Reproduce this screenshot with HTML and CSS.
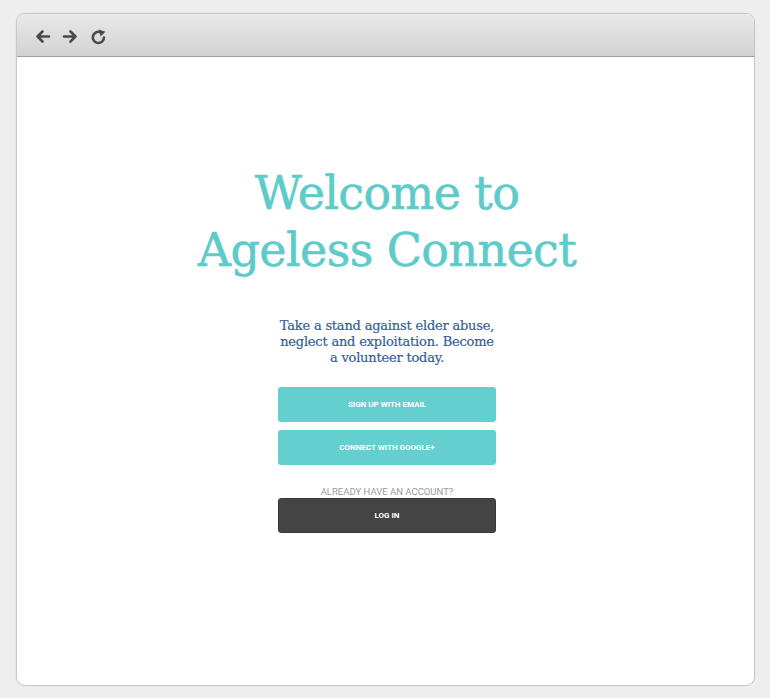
FILE: index.html
```html
<!DOCTYPE html>
<html>
<head>
<meta charset="utf-8">
<link rel="stylesheet" href="styles.css">
</head>
<body>
<div class="window">
  <div class="toolbar">
    <svg class="icon" width="17" height="17" viewBox="0 0 17 17"><path d="M15 8.5H3.5M8.5 3.5l-5 5 5 5" fill="none" stroke="#4a4a4a" stroke-width="2.6" stroke-linecap="round" stroke-linejoin="round"/></svg>
    <svg class="icon" width="17" height="17" viewBox="0 0 17 17"><path d="M2 8.5h11.5M8.5 3.5l5 5-5 5" fill="none" stroke="#4a4a4a" stroke-width="2.6" stroke-linecap="round" stroke-linejoin="round"/></svg>
    <svg class="icon" width="17" height="17" viewBox="0 0 17 17"><path d="M14 9.5A5.6 5.6 0 1 1 10.2 4.1" fill="none" stroke="#4a4a4a" stroke-width="2.6" stroke-linecap="round"/><path d="M8.6 1.4L15.4 3.8 10.6 8.6Z" fill="#4a4a4a"/></svg>
  </div>
  <div class="content">
    <h1 class="title">Welcome to<br>Ageless Connect</h1>
    <p class="lead">Take a stand against elder abuse, neglect and exploitation. Become a volunteer today.</p>
    <div class="actions">
      <button class="btn btn-teal">SIGN UP WITH EMAIL</button>
      <button class="btn btn-teal">CONNECT WITH GOOGLE+</button>
      <div class="already">ALREADY HAVE AN ACCOUNT?</div>
      <button class="btn btn-dark">LOG IN</button>
    </div>
  </div>
</div>
</body>
</html>
```

FILE: styles.css
```css
html, body {
  margin: 0;
  padding: 0;
  background: #eeeeee;
}
body {
  padding: 13px 15px 12px 16px;
}
.window {
  height: 673px;
  box-sizing: border-box;
  background: #fff;
  border: 1px solid #c8c8c8;
  border-radius: 9px;
  box-shadow: 0 0 2px rgba(0,0,0,0.08);
  overflow: hidden;
  display: flex;
  flex-direction: column;
}
.toolbar {
  height: 43px;
  flex: none;
  background: linear-gradient(#e9e9e9, #d2d2d2);
  border-bottom: 1px solid #9e9e9e;
  display: flex;
  align-items: center;
  gap: 11px;
  padding-left: 17px;
  padding-top: 2px;
  box-sizing: border-box;
}
.icon { display: block; }
.content {
  display: flex;
  flex-direction: column;
  align-items: center;
  padding-top: 108px;
  padding-left: 3px;
}
.title {
  margin: 0;
  font-family: "DejaVu Serif", serif;
  font-weight: normal;
  font-size: 46px;
  line-height: 57px;
  color: #5ecbcb;
  text-align: center;
  letter-spacing: -0.6px;
  -webkit-text-stroke: 0.6px #5ecbcb;
}
.lead {
  margin: 39px 0 0;
  width: 220px;
  font-family: "DejaVu Serif", serif;
  font-size: 13px;
  line-height: 16px;
  color: #345d98;
  text-align: center;
  letter-spacing: -0.2px;
  -webkit-text-stroke: 0.2px #345d98;
}
.actions {
  margin-top: 21px;
  width: 218px;
  display: flex;
  flex-direction: column;
  align-items: stretch;
  gap: 8px;
}
.btn {
  height: 35px;
  border: none;
  border-radius: 3px;
  font-family: Roboto, "Liberation Sans", sans-serif;
  font-weight: bold;
  font-size: 8px;
  color: #fff;
  padding: 0;
}
.btn-teal { background: #63cfcf; }
.btn-dark { background: #444444; border: 1px solid #3a3a3a; }
.already {
  margin-top: 13px;
  margin-bottom: -7px;
  text-align: center;
  font-family: Roboto, "Liberation Sans", sans-serif;
  font-size: 9.5px;
  color: #9a9a9a;
}
```
